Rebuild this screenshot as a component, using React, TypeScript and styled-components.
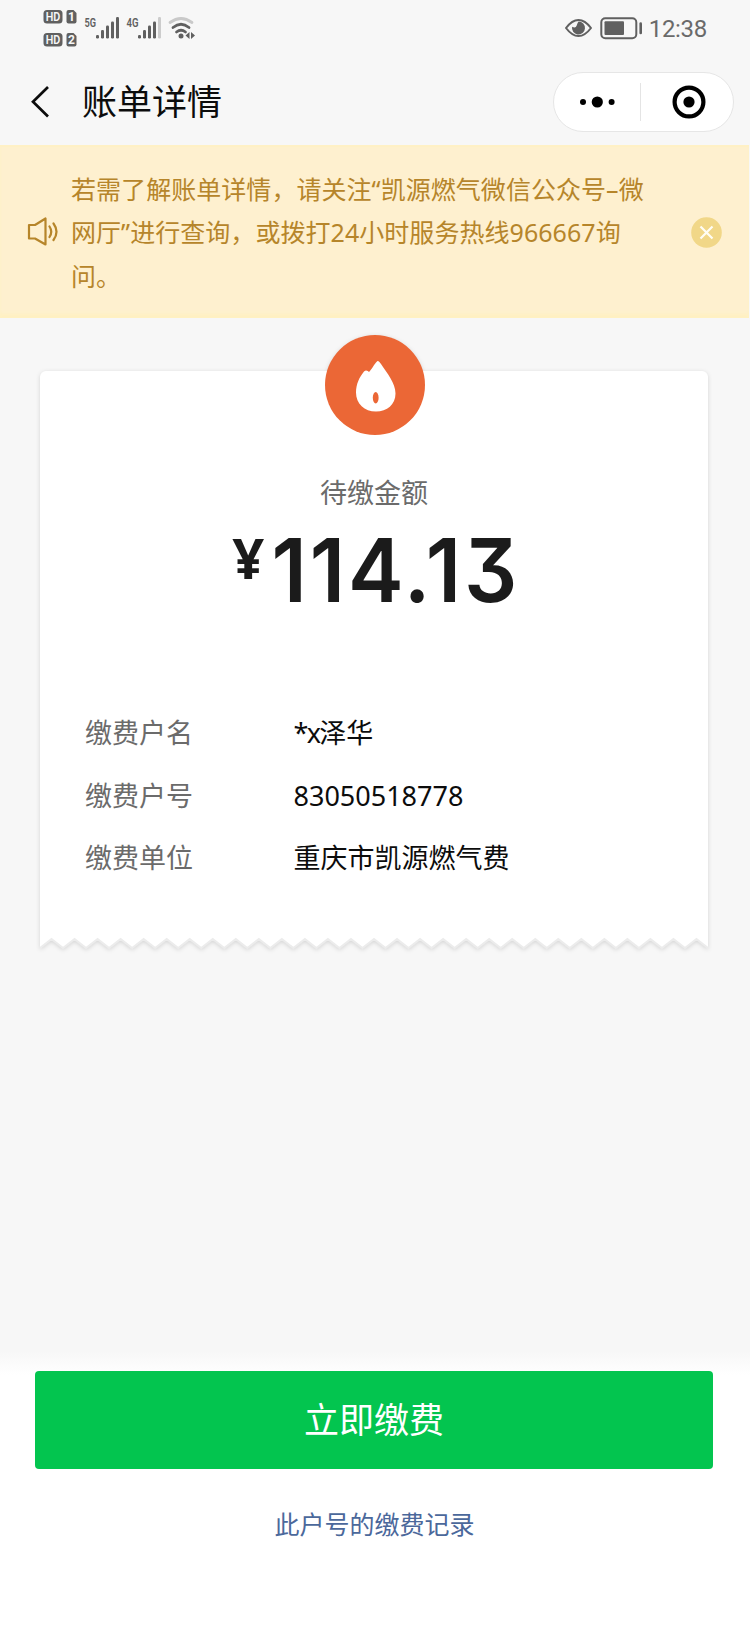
import React from 'react';
import styled, { createGlobalStyle } from 'styled-components';

const GlobalStyle = createGlobalStyle`
  * { box-sizing: border-box; }
  body {
    margin: 0;
    background: #f7f7f7;
    font-family: 'Noto Sans', 'Noto Sans CJK SC', sans-serif;
  }
`;

const Page = styled.div`
  width: 750px;
  height: 1625px;
  display: flex;
  flex-direction: column;
  background: #f7f7f7;
  overflow: hidden;
`;

const StatusBar = styled.header`
  height: 58px;
  flex: none;
  display: flex;
  align-items: flex-start;
  justify-content: space-between;
  padding: 0 43px 0 40px;
`;

const StatusRight = styled.div`
  display: flex;
  align-items: flex-start;
`;

const Clock = styled.time`
  margin: 16px 0 0 6px;
  font: 400 24px/26px Roboto, sans-serif;
  letter-spacing: -0.3px;
  color: #6a6a6a;
`;

const NavBar = styled.nav`
  height: 87px;
  flex: none;
  display: flex;
  align-items: center;
  padding: 0 16.5px 0 30px;
`;

const Title = styled.h1`
  flex: 1;
  margin: 1px 0 0 32px;
  font-size: 35px;
  line-height: 50px;
  font-weight: 400;
  color: #0c0c0c;
`;

const Capsule = styled.div`
  width: 181px;
  height: 60px;
  border: 1.5px solid #e6e6e6;
  border-radius: 30px;
  background: #fff;
  display: flex;
  align-items: center;
`;

const CapsuleButton = styled.button<{ $nudge?: number }>`
  flex: 1;
  height: 38px;
  padding: 0 0 0 ${(p) => p.$nudge ?? 0}px;
  border: 0;
  background: none;
  display: flex;
  align-items: center;
  justify-content: center;
  & + & { border-left: 1px solid #e4e4e4; }
`;

const Notice = styled.section`
  height: 173px;
  flex: none;
  margin-right: 1px;
  display: flex;
  align-items: center;
  padding: 1px 27px 0 27px;
  background: #fef0cf;
  box-shadow: inset 0 2px 2px #fff1c4, inset 0 -6px 4px -2px #fff1c1;
`;

const NoticeText = styled.p`
  width: 585px;
  margin: 2px auto 0 11px;
  white-space: nowrap;
  font-size: 25px;
  line-height: 43.5px;
  letter-spacing: 0.05px;
  color: #b6852a;
`;

const Main = styled.main`
  flex: 1;
  padding: 53px 42px 0 40px;
`;

const Bill = styled.article`
  position: relative;
  filter: drop-shadow(0 1px 2px rgba(0, 0, 0, 0.14));
`;

const BillBody = styled.div`
  height: 567px;
  padding: 100px 45px 0;
  border-radius: 6px 6px 0 0;
  background: #fff;
`;

const TornEdge = styled.svg`
  display: block;
  width: 100%;
  height: 10px;
  overflow: visible;
`;

const FlameBadge = styled.svg`
  position: absolute;
  top: -36px;
  left: 284.5px;
`;

const Caption = styled.div`
  font-size: 27px;
  line-height: 44px;
  text-align: center;
  color: #6b6b6b;
`;

const Amount = styled.div`
  height: 110px;
  display: flex;
  align-items: flex-start;
  justify-content: center;
  padding-left: 11px;
  font-family: Inter, sans-serif;
  font-weight: 600;
  color: #1b1b1b;
`;

const Currency = styled.span`
  margin: 14px 1px 0 0;
  font: 700 56px/56px 'Noto Sans', sans-serif;
`;

const Figure = styled.span`
  font-size: 88px;
  line-height: 110px;
  letter-spacing: 3px;
  font-feature-settings: 'cv09';
  transform: scaleX(0.95);
`;

const Details = styled.dl`
  margin: 77px 0 0;
  display: grid;
  grid-template-columns: 208.5px 1fr;
  grid-auto-rows: 62.5px;
  align-items: center;
  font-size: 27px;
  line-height: 40px;
`;

const Label = styled.dt`
  color: #6b6b6b;
`;

const Value = styled.dd`
  margin: 0;
  color: #0c0c0c;
`;

const Mask = styled.span`
  letter-spacing: -1.7px;
`;

const Footer = styled.footer`
  height: 274px;
  flex: none;
  display: flex;
  flex-direction: column;
  align-items: center;
  padding: 20px 37px 0 35px;
  background: linear-gradient(#f7f7f7, #fff 24px);
`;

const PayButton = styled.button`
  width: 100%;
  height: 98px;
  padding: 0;
  border: 0;
  border-radius: 4px;
  background: #03c54f;
  color: #fff;
  font: 400 35px/50px 'Noto Sans', 'Noto Sans CJK SC', sans-serif;
`;

const HistoryLink = styled.a`
  margin: 35px 0 0 1px;
  font-size: 25px;
  line-height: 40px;
  color: #4b689b;
`;

const rows = [
  { label: '缴费户名', mask: '*x', value: '泽华' },
  { label: '缴费户号', value: '83050518778' },
  { label: '缴费单位', value: '重庆市凯源燃气费' },
];

const TEETH = 29;
const PITCH = 668 / TEETH;
const edge = Array.from({ length: TEETH }, (_, i) =>
  `L${((i + 0.5) * PITCH).toFixed(2)} 1 L${((i + 1) * PITCH).toFixed(2)} 10`,
).join(' ');

const SignalIcons = () => (
  <svg width="160" height="52" fill="#606060" fontFamily="Roboto, sans-serif">
    {[[10, '1'], [33, '2']].map(([y, n]) => (
      <g key={n} transform={`translate(3.5 ${y})`}>
        <rect width="19" height="13.5" rx="3.5" />
        <text x="2.2" y="11.1" fontSize="12" fontWeight="600" fill="#f7f7f7" textLength="14.6" lengthAdjust="spacingAndGlyphs">HD</text>
        <path d="M25 0h5l3 3v8.500a2 2 0 0 1-2 2h-6a2 2 0 0 1-2-2V2a2 2 0 0 1 2-2z" />
        <text x="28" y="11.1" fontSize="12" fontWeight="700" fill="#f7f7f7" textAnchor="middle">{n}</text>
      </g>
    ))}
    <text x="44.5" y="26.5" fontSize="13" fontWeight="600" textLength="11.5" lengthAdjust="spacingAndGlyphs">5G</text>
    <text x="86.5" y="26.5" fontSize="13" fontWeight="600" textLength="12" lengthAdjust="spacingAndGlyphs">4G</text>
    {[56, 98].map((x) => (
      <g key={x} transform={`translate(${x} 0)`}>
        <rect y="35" width="3" height="3.5" rx="1.2" />
        <rect x="5" y="30" width="3" height="8.5" rx="1.2" />
        <rect x="10" y="25.5" width="3" height="13" rx="1.2" />
        <rect x="15" y="21.5" width="3" height="17" rx="1.2" />
        <rect x="20" y="17" width="3" height="21.5" rx="1.2" fill={x === 98 ? '#ccc' : '#606060'} />
      </g>
    ))}
    <g fill="none" strokeLinecap="round" strokeWidth="2.8">
      <path d="M130 22.5Q141 14.5 152 22.5" stroke="#c9c9c9" />
      <path d="M133 27.5Q141 21 149 27.5M136.5 32Q141 28.5 145.5 32" stroke="#606060" />
    </g>
    <circle cx="141" cy="36" r="2.5" />
    <path d="M149.500 32v7l-4-3.500zM151 32v7l4-3.500z" />
  </svg>
);

export default function App() {
  return (
    <>
      <GlobalStyle />
      <Page>
        <StatusBar>
          <SignalIcons />
          <StatusRight>
            <svg width="80" height="45" viewBox="561 0 80 45" fill="none" stroke="#606060">
              <path d="M564 28Q570 20 576.5 20T589 28Q583 36 576.5 36T564 28Z" strokeWidth="2" strokeLinejoin="round" />
              <path d="M576.5 21.5a6.5 6.5 0 1 1-6.4 5.2q3.6 2 4.5-1t1.9-4.2z" fill="#606060" stroke="none" />
              <rect x="599.3" y="18.3" width="35" height="20" rx="4" strokeWidth="2" />
              <rect x="602.5" y="21.3" width="19.5" height="13.8" rx="1" fill="#606060" stroke="none" />
              <path d="M638.7 23.5v9.5" strokeWidth="2.6" strokeLinecap="round" />
            </svg>
            <Clock>12:38</Clock>
          </StatusRight>
        </StatusBar>

        <NavBar>
          <svg width="20" height="32" viewBox="0 0 20 32" fill="none" stroke="#0c0c0c" strokeWidth="2.7">
            <path d="M18 1L3 15.7L18 30.5" />
          </svg>
          <Title>账单详情</Title>
          <Capsule>
            <CapsuleButton aria-label="更多">
              <svg width="36" height="12">
                <circle cx="4" cy="6" r="3" />
                <circle cx="18.3" cy="6" r="5.6" />
                <circle cx="32.6" cy="6" r="3" />
              </svg>
            </CapsuleButton>
            <CapsuleButton aria-label="关闭" $nudge={5}>
              <svg width="34" height="34">
                <circle cx="17" cy="17" r="14.4" fill="none" stroke="#000" strokeWidth="4.2" />
                <circle cx="17" cy="17" r="5.6" />
              </svg>
            </CapsuleButton>
          </Capsule>
        </NavBar>

        <Notice>
          <svg width="33" height="30" viewBox="0 0 33 30" fill="none" stroke="#b6852a" strokeWidth="2.2" strokeLinejoin="round">
            <path d="M2 8H8L18.5 1.5V27.5L8 21.5H2Z" />
            <path d="M22.5 9.5Q26 14.7 22.5 20M26.5 6.5Q32.5 14.7 26.5 23" strokeLinecap="round" />
          </svg>
          <NoticeText>
            若需了解账单详情，请关注“凯源燃气微信公众号–微<br />
            网厅”进行查询，或拨打24小时服务热线966667询<br />
            问。
          </NoticeText>
          <svg width="31" height="31">
            <circle cx="15.5" cy="15.5" r="15.3" fill="#f1d788" />
            <path d="M9.5 9.5l12 12M21.5 9.5l-12 12" stroke="#fffdf5" strokeWidth="2.2" />
          </svg>
        </Notice>

        <Main>
          <Bill>
            <BillBody>
              <Caption>待缴金额</Caption>
              <Amount>
                <Currency>¥</Currency>
                <Figure>114.13</Figure>
              </Amount>
              <Details>
                {rows.map(({ label, mask, value }) => (
                  <React.Fragment key={label}>
                    <Label>{label}</Label>
                    <Value>{mask && <Mask>{mask}</Mask>}{value}</Value>
                  </React.Fragment>
                ))}
              </Details>
            </BillBody>
            <TornEdge viewBox="0 0 668 10">
              <path d={`M0 -1V10 ${edge} V-1Z`} fill="#fff" />
              <path d={`M0 10 ${edge}`} fill="none" stroke="#ececec" strokeWidth="2" />
            </TornEdge>
            <FlameBadge width="100" height="100">
              <circle cx="50" cy="50" r="50" fill="#eb6736" />
              <path d="M52.5 26C54 26 55 27.5 56 29C62 38 70.5 48 70.5 58.5C70.5 69.5 62 76.5 51 76.5C39.500 76.500 31 69 31 57.500C31 49 34.500 42 39 36.500C41 34.500 43 36 44 37C46.500 35 49 29 52.500 26Z" fill="#fff" />
              <ellipse cx="50.7" cy="62.7" rx="2.900" ry="5.700" fill="#eb6736" />
            </FlameBadge>
          </Bill>
        </Main>

        <Footer>
          <PayButton>立即缴费</PayButton>
          <HistoryLink>此户号的缴费记录</HistoryLink>
        </Footer>
      </Page>
    </>
  );
}
